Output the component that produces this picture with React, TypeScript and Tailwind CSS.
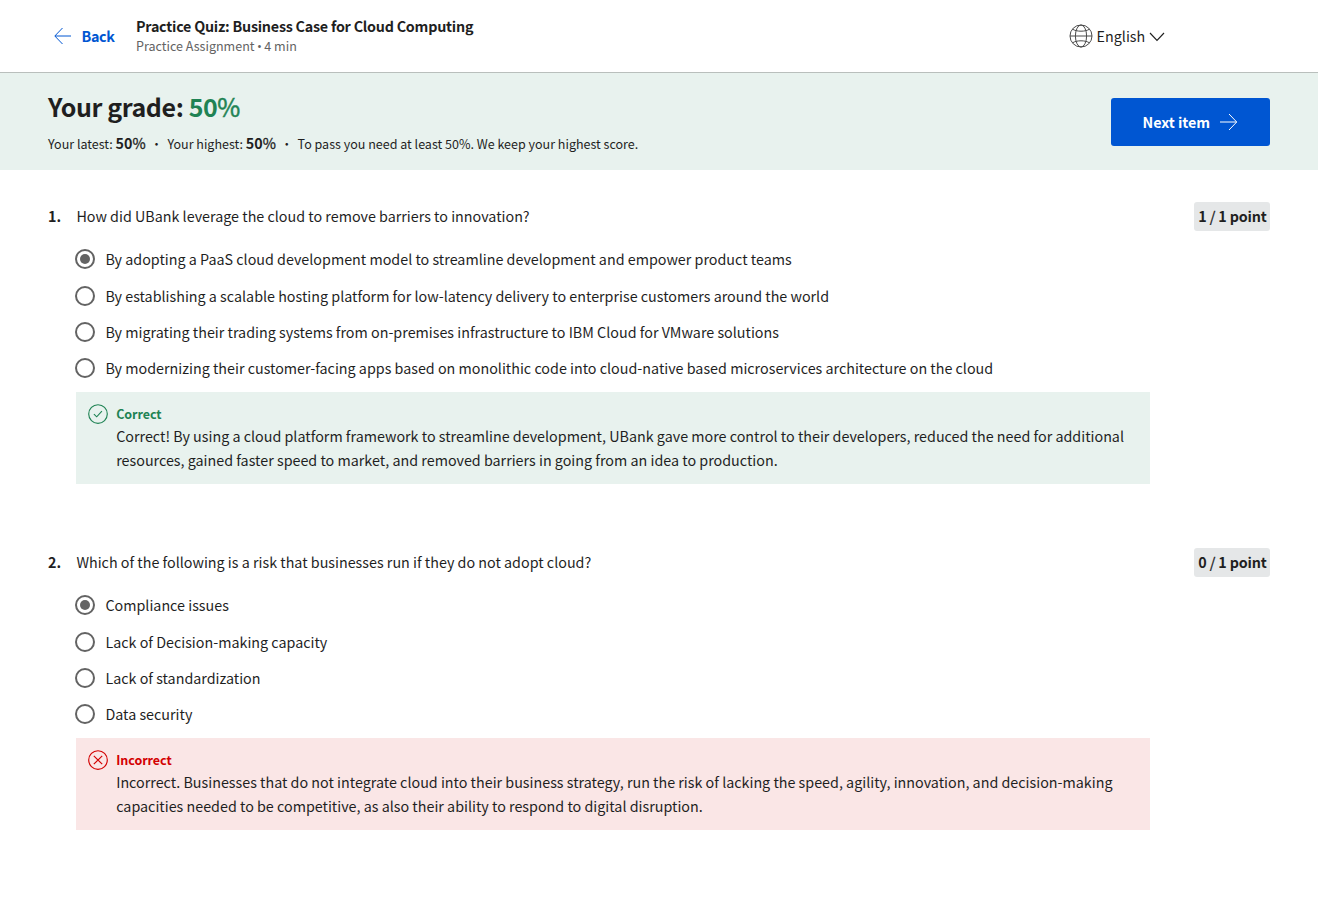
import React from 'react';

const FONT = "font-['Noto_Sans_CJK_SC','Noto_Sans',sans-serif]";

function Radio({ on }: { on: boolean }) {
  return (
    <svg width="20" height="20" viewBox="0 0 20 20" className="shrink-0" fill="none">
      <circle cx="10" cy="10" r="9" stroke="#636363" strokeWidth="2" />
      {on && <circle cx="10" cy="10" r="5" fill="#636363" />}
    </svg>
  );
}

function Globe() {
  return (
    <svg width="24" height="24" viewBox="0 0 24 24" fill="none" stroke="#4a4a4a" strokeWidth="1" className="shrink-0">
      <circle cx="12" cy="12" r="11" />
      <ellipse cx="12" cy="12" rx="5.6" ry="11" />
      <path d="M1 12h22M3.6 5.2c2.2 1.4 5.2 2 8.4 2s6.2-.6 8.4-2M3.6 18.8c2.2-1.4 5.2-2 8.4-2s6.2.6 8.4 2" />
    </svg>
  );
}

type Q = { n: string; q: string; score: string; opts: string[]; ok: boolean; text: string };

const questions: Q[] = [
  {
    n: '1.',
    q: 'How did UBank leverage the cloud to remove barriers to innovation?',
    score: '1',
    opts: [
      'By adopting a PaaS cloud development model to streamline development and empower product teams',
      'By establishing a scalable hosting platform for low-latency delivery to enterprise customers around the world',
      'By migrating their trading systems from on-premises infrastructure to IBM Cloud for VMware solutions',
      'By modernizing their customer-facing apps based on monolithic code into cloud-native based microservices architecture on the cloud',
    ],
    ok: true,
    text: 'Correct! By using a cloud platform framework to streamline development, UBank gave more control to their developers, reduced the need for additional resources, gained faster speed to market, and removed barriers in going from an idea to production.',
  },
  {
    n: '2.',
    q: 'Which of the following is a risk that businesses run if they do not adopt cloud?',
    score: '0',
    opts: ['Compliance issues', 'Lack of Decision-making capacity', 'Lack of standardization', 'Data security'],
    ok: false,
    text: 'Incorrect. Businesses that do not integrate cloud into their business strategy, run the risk of lacking the speed, agility, innovation, and decision-making capacities needed to be competitive, as also their ability to respond to digital disruption.',
  },
];

function Question({ d }: { d: Q }) {
  return (
    <section className="flex h-[346px] items-start px-12">
      <div className="w-7 shrink-0 pt-[2px] font-bold">{d.n}</div>
      <div className="w-[1074px] shrink-0">
        <p className="pl-[0.4px] pt-[2px]">{d.q}</p>
        <ul className="-ml-px mt-[19px]">
          {d.opts.map((o, i) => (
            <li key={o} className={`flex h-6 items-center gap-[10.4px] ${i === 0 ? 'mb-[13px]' : 'mb-3'}`}>
              <Radio on={i === 0} />
              <span>{o}</span>
            </li>
          ))}
        </ul>
        <div className={`flex h-[92px] items-start gap-[8.2px] px-3 pt-3 ${d.ok ? 'bg-[#e8f2ee]' : 'bg-[#fae6e6]'}`}>
          <svg width="20" height="20" viewBox="0 0 20 20" fill="none" stroke={d.ok ? '#1f8354' : '#d30001'} strokeWidth="1.15" className="shrink-0">
            <circle cx="10" cy="10" r="9.3" />
            {d.ok ? <path d="M5.9 10.1l2.8 2.7 5.2-5.6" /> : <path d="M5.8 5.8l8.4 8.4M14.2 5.8l-8.4 8.4" />}
          </svg>
          <div>
            <div className={`h-5 text-[12.5px] font-bold leading-5 tracking-[-0.05px] ${d.ok ? 'text-[#1f8354]' : 'text-[#d30001]'}`}>
              {d.ok ? 'Correct' : 'Incorrect'}
            </div>
            <p className="w-[1016px]">{d.text}</p>
          </div>
        </div>
      </div>
      <div className="ml-auto h-[29px] w-[76px] whitespace-nowrap rounded-[3px] bg-[#e5e7e8] pl-px text-center font-bold leading-7 tracking-[-0.15px]">
        {d.score} <span className="font-normal [-webkit-text-stroke:0.3px]">/</span> 1 point
      </div>
    </section>
  );
}

function Half() {
  return (
    <b className="text-[14.3px]">
      50<span className="font-normal [-webkit-text-stroke:0.3px]">%</span>
    </b>
  );
}

export default function App() {
  return (
    <div className={`h-[910px] w-[1318px] overflow-hidden bg-white text-[14.32px] leading-6 text-[#1f1f1f] ${FONT}`}>
      <header className="flex h-[73px] border-b border-[#b9bfbc] px-12">
        <div className="flex w-[88px] items-center pl-[6px] font-bold text-[#0056d2]">
          <svg width="18" height="18" viewBox="0 0 18 18" fill="none" stroke="currentColor" className="mr-[9.5px] shrink-0">
            <path d="M8.5 1L.8 9l7.7 8M1 9h16" />
          </svg>
          <span className="tracking-[-0.3px]">Back</span>
        </div>
        <div className="whitespace-nowrap pt-4">
          <div className="h-5 font-bold leading-5 tracking-[-0.23px]">Practice Quiz: Business Case for Cloud Computing</div>
          <div className="flex h-5 text-[12.54px] leading-5 text-[#636363]">
            <span>Practice Assignment</span>
            <span className="w-[9.8px] text-center font-['Open_Sans',sans-serif] text-[13px]">•</span>
            <span>4 min</span>
          </div>
        </div>
        <div className="ml-auto mr-[105px] flex items-center">
          <Globe />
          <span className="ml-[3.6px]">English</span>
          <svg width="16" height="10" viewBox="0 0 16 10" fill="none" stroke="#1f1f1f" strokeWidth="1.15" className="ml-[3.8px] mt-px">
            <path d="M1 1l7 7.3L15 1" />
          </svg>
        </div>
      </header>
      <div className="flex h-[97px] items-center justify-between bg-[#e8f2ee] px-12">
        <div className="whitespace-nowrap pt-[3px]">
          <h1 className="text-[25px] font-bold leading-8 tracking-[-0.4px]">
            Your grade: <span className="text-[#1f8354]">50<span className="font-normal [-webkit-text-stroke:0.5px]">%</span></span>
          </h1>
          <p className="mt-[9px] flex items-baseline text-[12.53px] leading-6">
            <span>Your latest:&nbsp;</span>
            <Half />
            <span className="w-[21.8px] text-center">•</span>
            <span>Your highest:&nbsp;</span>
            <Half />
            <span className="w-[21.8px] text-center">•</span>
            <span>To pass you need at least 50%. We keep your highest score.</span>
          </p>
        </div>
        <button className="flex h-12 w-[159px] items-center rounded-[3px] bg-[#0056d2] pl-[31.6px] font-bold text-white">
          <span className="tracking-[-0.05px]">Next item</span>
          <svg width="18" height="18" viewBox="0 0 18 18" fill="none" stroke="currentColor" className="ml-[9.5px]">
            <path d="M9 1l7.7 8L9 17M0 9h16.5" />
          </svg>
        </button>
      </div>
      <main className="pt-8">
        {questions.map((q) => <Question key={q.n} d={q} />)}
      </main>
    </div>
  );
}
